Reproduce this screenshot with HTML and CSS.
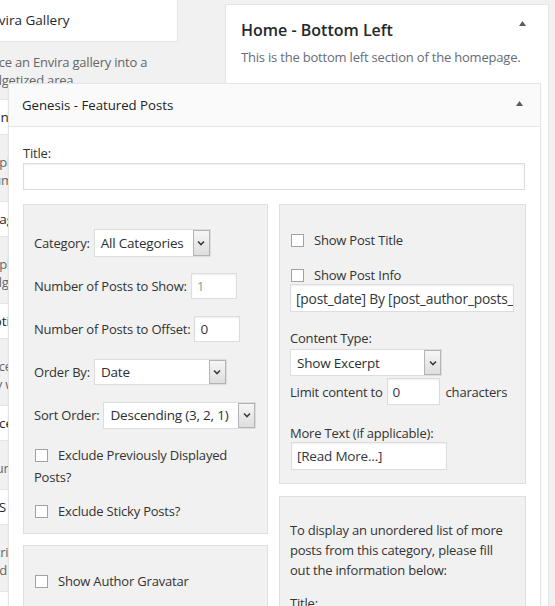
FILE: index.html
```html
<!DOCTYPE html>
<html lang="en">
<head>
<meta charset="utf-8">
<title>Widgets</title>
<link rel="stylesheet" href="styles.css">
</head>
<body>
<div class="page">
  <div class="widget-list">
    <div class="item first">
      <div class="item-title">Envira Gallery</div>
      <div class="item-desc">Place an Envira gallery into a<br>widgetized area</div>
    </div>
    <div class="item">
      <div class="item-title">Genesis - Featured Page</div>
      <div class="item-desc">Displays featured page with<br>thumbnails</div>
    </div>
    <div class="item">
      <div class="item-title">Image</div>
      <div class="item-desc">Displays an image in a<br>widget area.</div>
    </div>
    <div class="item">
      <div class="item-title">Optin Form</div>
      <div class="item-desc">Place a subscribe form in<br>any widget area.</div>
    </div>
    <div class="item">
      <div class="item-title">Recent Comments</div>
      <div class="item-desc">Your site's recent comments.</div>
    </div>
    <div class="item">
      <div class="item-title">RSS</div>
      <div class="item-desc">Entries from any RSS or Atom<br>feed url.</div>
    </div>
    <div class="item">
      <div class="item-title">Search</div>
      <div class="item-desc">A search form for your site.</div>
    </div>
  </div>

  <div class="sidebar">
    <div class="sidebar-head">
      <h2>Home - Bottom Left</h2>
      <svg class="tri" width="7" height="5" viewBox="0 0 7 5"><polygon points="0,5 3.5,0 7,5"/></svg>
    </div>
    <p class="sidebar-desc">This is the bottom left section of the homepage.</p>
  </div>

  <div class="widget">
    <div class="widget-top">
      <h3>Genesis - Featured Posts</h3>
      <svg class="tri" width="7" height="5" viewBox="0 0 7 5"><polygon points="0,5 3.5,0 7,5"/></svg>
    </div>
    <div class="widget-inside">
      <div class="lbl title-lbl">Title:</div>
      <div class="text title-input"></div>

      <div class="cols">
        <div class="col">
          <div class="box box-query">
            <div class="row">
              <span class="lbl">Category:</span>
              <div class="select sel-cat"><span class="val">All Categories</span><span class="arrow"><svg width="8" height="6" viewBox="0 0 8 6"><path d="M1 1.5 L4 4.5 L7 1.5"/></svg></span></div>
            </div>
            <div class="row">
              <span class="lbl">Number of Posts to Show:</span>
              <div class="text num light">1</div>
            </div>
            <div class="row">
              <span class="lbl">Number of Posts to Offset:</span>
              <div class="text num">0</div>
            </div>
            <div class="row">
              <span class="lbl">Order By:</span>
              <div class="select sel-order"><span class="val">Date</span><span class="arrow"><svg width="8" height="6" viewBox="0 0 8 6"><path d="M1 1.5 L4 4.5 L7 1.5"/></svg></span></div>
            </div>
            <div class="row">
              <span class="lbl">Sort Order:</span>
              <div class="select sel-sort"><span class="val">Descending (3, 2, 1)</span><span class="arrow"><svg width="8" height="6" viewBox="0 0 8 6"><path d="M1 1.5 L4 4.5 L7 1.5"/></svg></span></div>
            </div>
            <p class="check check-first"><span class="cb"></span>Exclude Previously Displayed Posts?</p>
            <p class="check check-next"><span class="cb"></span>Exclude Sticky Posts?</p>
          </div>
          <div class="box box-author">
            <p class="check"><span class="cb"></span>Show Author Gravatar</p>
          </div>
        </div>

        <div class="col col-right">
          <div class="box box-content">
            <p class="check"><span class="cb"></span>Show Post Title</p>
            <p class="check check-info"><span class="cb"></span>Show Post Info</p>
            <div class="text info-input">[post_date] By [post_author_posts_link] [post_comments]</div>
            <div class="lbl ctype-lbl">Content Type:</div>
            <div class="select sel-ctype"><span class="val">Show Excerpt</span><span class="arrow"><svg width="8" height="6" viewBox="0 0 8 6"><path d="M1 1.5 L4 4.5 L7 1.5"/></svg></span></div>
            <div class="limit-row">
              <span class="lbl">Limit content to</span>
              <div class="text limit-input">0</div>
              <span class="lbl">characters</span>
            </div>
            <div class="lbl more-lbl">More Text (if applicable):</div>
            <div class="text more-input">[Read More...]</div>
          </div>
          <div class="box box-more">
            <p class="more-info">To display an unordered list of more<br>posts from this category, please fill<br>out the information below:</p>
            <div class="lbl more-title">Title:</div>
          </div>
        </div>
      </div>
    </div>
  </div>
</div>
</body>
</html>
```

FILE: styles.css
```css
* { box-sizing: border-box; }

html, body {
  margin: 0;
  padding: 0;
}

body {
  width: 555px;
  height: 606px;
  overflow: hidden;
  background: #f1f1f1;
  font-family: "Open Sans", "Noto Sans", sans-serif;
  font-size: 13px;
  color: #333;
}

.page {
  position: relative;
  display: flex;
  align-items: flex-start;
  height: 606px;
}

/* ---------- available widgets (left, mostly hidden) ---------- */
.widget-list {
  flex: none;
  width: 212px;
  margin-left: -34px;
  margin-top: -2px;
}

.item-title {
  background: #fff;
  border: 1px solid #e5e5e5;
  height: 36px;
  line-height: 34px;
  padding-left: 16px;
  font-size: 13.5px;
  color: #23282d;
  white-space: nowrap;
  overflow: hidden;
}

.item.first .item-title {
  height: 44px;
  line-height: 42px;
}

.item-desc {
  margin: 18px 0 12px;
  padding: 0 8px 0 15px;
  line-height: 18px;
  color: #666;
  letter-spacing: -0.2px;
  white-space: nowrap;
  overflow: hidden;
}

.item.first .item-desc {
  margin: 11px 0 10px;
}

/* ---------- sidebar ---------- */
.sidebar {
  flex: none;
  width: 324px;
  height: 640px;
  margin-left: 47px;
  margin-top: 4px;
  background: #fff;
  border: 1px solid #e5e5e5;
  box-shadow: 0 1px 1px rgba(0, 0, 0, .04);
}

.sidebar-head {
  display: flex;
  justify-content: space-between;
  align-items: flex-start;
  padding: 14px 22px 0 15px;
}

.sidebar-head h2 {
  margin: 0;
  font-size: 16px;
  font-weight: 600;
  line-height: 22px;
  color: #23282d;
}

.sidebar-head .tri { margin-top: 2px; }

.tri polygon { fill: #555d66; }

.sidebar-desc {
  margin: 7px 0 0 15px;
  line-height: 18px;
  color: #666d75;
  letter-spacing: -0.2px;
}

/* ---------- expanded widget (over the lists) ---------- */
.widget {
  position: absolute;
  left: 8px;
  top: 83px;
  width: 533px;
  height: 560px;
  background: #fff;
  border: 1px solid #e5e5e5;
  box-shadow: 0 1px 2px rgba(0, 0, 0, .06);
}

.widget-top {
  height: 43px;
  background: #fafafa;
  border-bottom: 1px solid #e5e5e5;
  display: flex;
  justify-content: space-between;
  align-items: flex-start;
  padding: 0 17px 0 13px;
}

.widget-top h3 {
  margin: 0;
  font-size: 13.2px;
  font-weight: 400;
  line-height: 42px;
  color: #1d2125;
}

.widget-top .tri { margin-top: 17px; }

.widget-inside {
  padding: 0 14px 0 14px;
  letter-spacing: -0.2px;
}

.lbl {
  line-height: 18px;
  white-space: nowrap;
}

.title-lbl { margin-top: 17px; }

.text {
  background: #fff;
  border: 1px solid #ddd;
  box-shadow: inset 0 1px 2px rgba(0, 0, 0, .07);
  padding: 0 5px;
  color: #32373c;
  white-space: nowrap;
  overflow: hidden;
  display: flex;
  align-items: center;
}

.title-input {
  margin-top: 1px;
  width: 502px;
  height: 27px;
}

.cols {
  margin-top: 14px;
  display: grid;
  grid-template-columns: 245px 247px;
  column-gap: 11px;
  align-items: start;
}

.col {
  display: flex;
  flex-direction: column;
  gap: 11px;
}

.col-right { gap: 12px; }

.box {
  background: #f1f1f1;
  border: 1px solid #dfdfdf;
  padding: 0 10px;
}

/* left query box */
.box-query {
  padding-top: 24px;
  padding-bottom: 11px;
}

.row {
  height: 28px;
  display: flex;
  align-items: center;
  margin-bottom: 15px;
}

.row .lbl { margin-right: 4px; }

.select {
  display: flex;
  align-items: stretch;
  background: #fff;
  border: 1px solid #ddd;
  height: 27px;
  color: #2b2f33;
}

.select .val {
  flex: 1;
  padding-left: 6px;
  display: flex;
  align-items: center;
  white-space: nowrap;
  overflow: hidden;
  font-size: 13.5px;
}

.select .arrow {
  flex: none;
  width: 17px;
  border: 1px solid #b3b3b3;
  background: linear-gradient(#f6f6f6, #dedede);
  display: flex;
  align-items: center;
  justify-content: center;
}

.select .arrow path {
  fill: none;
  stroke: #3c3c3c;
  stroke-width: 1.6;
}

.sel-cat { width: 117px; height: 28px; }
.sel-order { width: 133px; height: 26px; }
.sel-sort { width: 153px; height: 27px; }

.num {
  width: 46px;
  height: 26px;
  font-size: 13.5px;
}

.num.light { color: #9a9a9a; }

.check {
  margin: 0;
  line-height: 22px;
}

.check-first { margin-top: 0; }
.check-next { margin-top: 12px; }

.cb {
  display: inline-block;
  width: 13px;
  height: 13px;
  border: 1px solid #a2a2a2;
  background: #fff;
  margin: 0 10px 0 1px;
  vertical-align: -2px;
}

.box-author {
  padding-top: 24px;
  height: 80px;
}

/* right content box */
.box-content {
  padding-top: 24px;
  padding-bottom: 13px;
}

.check-info { margin-top: 13px; }

.info-input {
  margin-top: -2px;
  width: 224px;
  height: 28px;
  font-size: 13.8px;
}

.ctype-lbl { margin-top: 17px; }

.sel-ctype {
  margin-top: 2px;
  width: 152px;
  height: 27px;
}

.limit-row {
  margin-top: 2px;
  display: flex;
  align-items: center;
}

.limit-input {
  width: 53px;
  height: 27px;
  margin: 0 6px 0 4px;
  font-size: 13.5px;
}

.more-lbl { margin-top: 19px; }

.more-input {
  width: 156px;
  height: 28px;
  margin-left: 1px;
  font-size: 13.5px;
}

.box-more {
  padding-top: 23px;
  height: 130px;
}

.more-info {
  margin: 0;
  line-height: 20px;
}

.more-title {
  margin-top: 14px;
}
```
